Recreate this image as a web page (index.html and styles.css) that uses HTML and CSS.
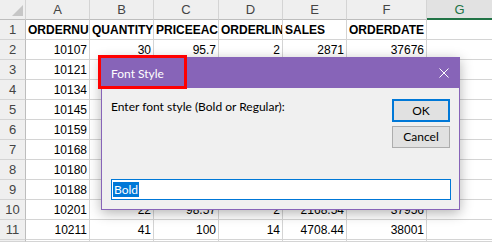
FILE: index.html
```html
<!DOCTYPE html>
<html lang="en">

<head>
    <meta charset="UTF-8">
    <title>Font Style</title>
    <link rel="stylesheet" href="styles.css">
</head>

<body>
    <div class="sheet">
        <!-- column headers -->
        <div class="hd corner"><span class="tri"></span></div>
        <div class="hd">A</div>
        <div class="hd">B</div>
        <div class="hd">C</div>
        <div class="hd">D</div>
        <div class="hd">E</div>
        <div class="hd">F</div>
        <div class="hd active">G</div>

        <div class="rh">1</div>
        <div class="c b">ORDERNUMBER</div>
        <div class="c b">QUANTITYORDERED</div>
        <div class="c b">PRICEEACH</div>
        <div class="c b">ORDERLINENUMBER</div>
        <div class="c b">SALES</div>
        <div class="c b">ORDERDATE</div>
        <div class="c"></div>

        <div class="rh">2</div>
        <div class="c n">10107</div>
        <div class="c n">30</div>
        <div class="c n">95.7</div>
        <div class="c n">2</div>
        <div class="c n">2871</div>
        <div class="c n">37676</div>
        <div class="c"></div>

        <!-- rows 3-9: B..F sit under the dialog -->
        <div class="rh">3</div>
        <div class="c n">10121</div>
        <div class="c"></div><div class="c"></div><div class="c"></div><div class="c"></div><div class="c"></div>
        <div class="c"></div>

        <div class="rh">4</div>
        <div class="c n">10134</div>
        <div class="c"></div><div class="c"></div><div class="c"></div><div class="c"></div><div class="c"></div>
        <div class="c"></div>

        <div class="rh">5</div>
        <div class="c n">10145</div>
        <div class="c"></div><div class="c"></div><div class="c"></div><div class="c"></div><div class="c"></div>
        <div class="c"></div>

        <div class="rh">6</div>
        <div class="c n">10159</div>
        <div class="c"></div><div class="c"></div><div class="c"></div><div class="c"></div><div class="c"></div>
        <div class="c"></div>

        <div class="rh">7</div>
        <div class="c n">10168</div>
        <div class="c"></div><div class="c"></div><div class="c"></div><div class="c"></div><div class="c"></div>
        <div class="c"></div>

        <div class="rh">8</div>
        <div class="c n">10180</div>
        <div class="c"></div><div class="c"></div><div class="c"></div><div class="c"></div><div class="c"></div>
        <div class="c"></div>

        <div class="rh">9</div>
        <div class="c n">10188</div>
        <div class="c"></div><div class="c"></div><div class="c"></div><div class="c"></div><div class="c"></div>
        <div class="c"></div>

        <div class="rh">10</div>
        <div class="c n">10201</div>
        <div class="c n">22</div>
        <div class="c n">98.57</div>
        <div class="c n">2</div>
        <div class="c n">2168.54</div>
        <div class="c n">37956</div>
        <div class="c"></div>

        <div class="rh">11</div>
        <div class="c n">10211</div>
        <div class="c n">41</div>
        <div class="c n">100</div>
        <div class="c n">14</div>
        <div class="c n">4708.44</div>
        <div class="c n">38001</div>
        <div class="c"></div>

        <div class="rh"></div>
        <div class="c"></div>
        <div class="c"></div>
        <div class="c"></div>
        <div class="c"></div>
        <div class="c"></div>
        <div class="c"></div>
        <div class="c"></div>
    </div>

    <!-- InputBox dialog -->
    <div class="dialog">
        <div class="titlebar">
            <span class="title">Font Style</span>
            <svg class="close" width="10" height="10" viewBox="0 0 10 10">
                <path d="M0.5 0.5 L9.5 9.5 M9.5 0.5 L0.5 9.5" stroke="#fff" stroke-width="1" fill="none"/>
            </svg>
        </div>
        <div class="dlg-body">
            <div class="dlg-top">
                <div class="prompt">Enter font style (Bold or Regular):</div>
                <div class="btns">
                    <div class="btn default">OK</div>
                    <div class="btn">Cancel</div>
                </div>
            </div>
            <div class="textbox"><span class="sel">Bold</span></div>
        </div>
    </div>

    <div class="highlight"></div>
</body>
</html>
```

FILE: styles.css
```css
body {
    margin: 0;
    width: 492px;
    height: 242px;
    overflow: hidden;
    background: #fff;
    position: relative;
}

.sheet {
    display: grid;
    grid-template-columns: 26px 64px 64px 65px 64px 64px 80px 66px;
    grid-template-rows: repeat(12, 20px) 2px;
    font-family: "Liberation Sans", Arial, sans-serif;
    font-size: 12px;
    color: #000;
}

.sheet > div {
    box-sizing: border-box;
    border-right: 1px solid #d4d4d4;
    border-bottom: 1px solid #d4d4d4;
    overflow: hidden;
    white-space: nowrap;
}

.hd {
    background: #efefef;
    color: #444;
    text-align: center;
    font-size: 13px;
    line-height: 20px;
    border-bottom-color: #bdbdbd !important;
}

.hd.active {
    color: #217346;
    background: #e2e2e2;
    border-bottom: 2px solid #217346 !important;
}

.corner {
    display: flex;
    align-items: flex-end;
    justify-content: flex-end;
    padding: 0 2px 3px 0;
}

.tri {
    width: 0;
    height: 0;
    border-left: 11px solid transparent;
    border-bottom: 11px solid #c6c6c6;
}

.rh {
    background: #efefef;
    color: #444;
    text-align: center;
    font-size: 13px;
    line-height: 20px;
    border-right-color: #bdbdbd !important;
}

.c {
    line-height: 21px;
    padding: 0 2px;
}

.c.n {
    text-align: right;
}

.c.b {
    font-weight: bold;
}

/* dialog */
.dialog {
    position: absolute;
    left: 101px;
    top: 57px;
    width: 359px;
    height: 153px;
    box-sizing: border-box;
    border: 1px solid #8764b8;
    background: #f0f0f0;
    box-shadow: 0 3px 12px rgba(0, 0, 0, 0.3);
    font-family: Lato, "Noto Sans", sans-serif;
    font-size: 12px;
    color: #000;
    display: flex;
    flex-direction: column;
}

.titlebar {
    height: 30px;
    background: #8764b8;
    color: #fff;
    display: flex;
    align-items: center;
    justify-content: space-between;
    padding: 0 10px 0 9px;
}

.dlg-body {
    flex: 1;
    padding: 11px 8px 0 9px;
    display: flex;
    flex-direction: column;
}

.dlg-top {
    display: flex;
    justify-content: space-between;
    flex: 1;
}

.prompt {
    line-height: 16px;
}

.btns {
    display: flex;
    flex-direction: column;
    gap: 4px;
    margin-right: 1px;
}

.btn {
    width: 58px;
    height: 22px;
    box-sizing: border-box;
    border: 1px solid #adadad;
    background: #e1e1e1;
    text-align: center;
    line-height: 20px;
}

.btn.default {
    height: 23px;
    border: 2px solid #0078d7;
    line-height: 19px;
}

.textbox {
    height: 21px;
    box-sizing: border-box;
    border: 1px solid #0078d7;
    background: #fff;
    margin-bottom: 9px;
    padding: 2px 1px;
    line-height: 15px;
}

.sel {
    background: #0078d7;
    color: #fff;
    padding: 0 1px;
}

/* red marker around the title */
.highlight {
    position: absolute;
    left: 98px;
    top: 55px;
    width: 83px;
    height: 28px;
    border: 3px solid #ff0000;
}
```
